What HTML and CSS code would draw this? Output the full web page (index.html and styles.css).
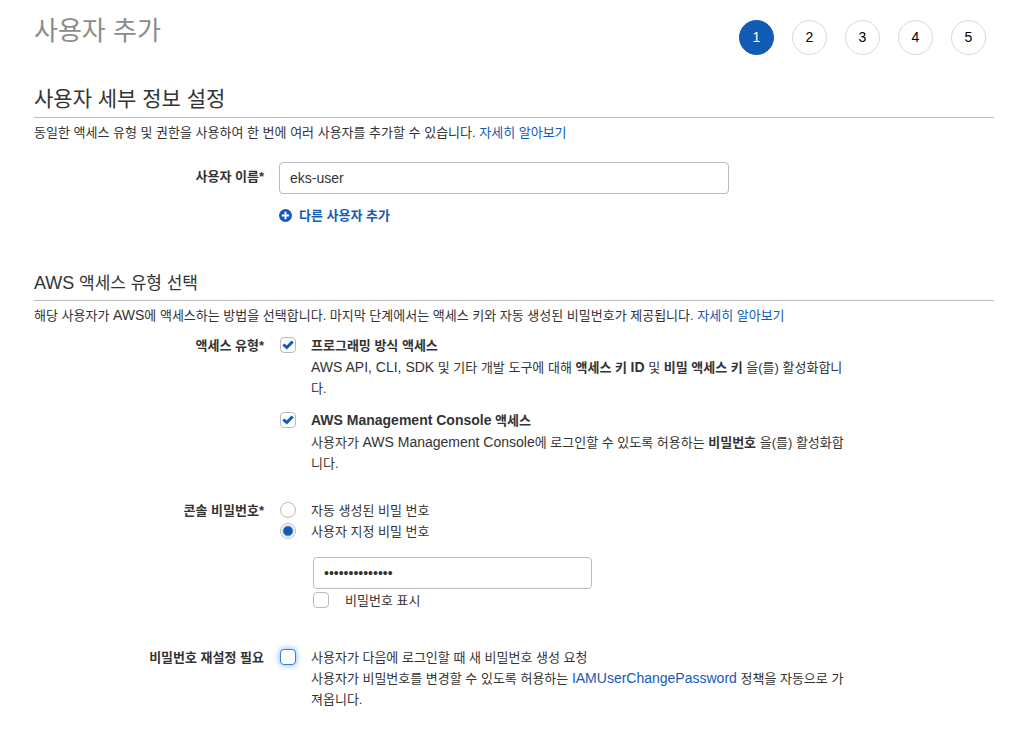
FILE: index.html
```html
<!DOCTYPE html>
<html lang="ko">
<head>
<meta charset="utf-8">
<meta name="viewport" content="width=device-width, initial-scale=1">
<title>사용자 추가</title>
<link rel="stylesheet" href="styles.css">
</head>
<body>
<main class="page">
  <header class="page-header">
    <h1 class="page-title">사용자 추가</h1>
    <ol class="steps">
      <li class="step step-current" aria-current="step">1</li>
      <li class="step">2</li>
      <li class="step">3</li>
      <li class="step">4</li>
      <li class="step">5</li>
    </ol>
  </header>

  <form>
    <section class="section">
      <h2 class="section-title">사용자 세부 정보 설정</h2>
      <p class="intro">동일한 액세스 유형 및 권한을 사용하여 한 번에 여러 사용자를 추가할 수 있습니다. <a class="link" href="#">자세히 알아보기</a></p>
      <div class="row row-name">
        <label class="row-label name-label" for="user-name">사용자 이름*</label>
        <div>
          <input class="text-input name-input" id="user-name" type="text" value="eks-user">
          <button class="add-button" type="button">
            <svg class="add-icon" viewBox="0 0 14 14" aria-hidden="true"><circle cx="7" cy="7" r="7" fill="currentColor"/><path d="M7 3v8M3 7h8" stroke="#fff" stroke-width="2.2"/></svg>
            다른 사용자 추가
          </button>
        </div>
      </div>
    </section>

    <section class="section">
      <h3 class="section-title section-subtitle"><span class="latin-large">AWS</span> 액세스 유형 선택</h3>
      <p class="intro">해당 사용자가 <span class="latin">AWS</span>에 액세스하는 방법을 선택합니다. 마지막 단계에서는 액세스 키와 자동 생성된 비밀번호가 제공됩니다. <a class="link" href="#">자세히 알아보기</a></p>

      <div class="row row-access" role="group" aria-labelledby="access-label">
        <span class="row-label" id="access-label">액세스 유형*</span>
        <div class="access-options">
          <div class="option">
            <span class="control">
              <input class="check" id="programmatic" type="checkbox" checked>
              <svg class="check-mark" viewBox="0 0 16 16" aria-hidden="true"><path d="M2.3 8.6 4.4 6.5 6.7 8.5 11.6 3.4 13.8 5.5 6.8 12.6Z" fill="currentColor"/></svg>
            </span>
            <div>
              <label class="option-title" for="programmatic">프로그래밍 방식 액세스</label>
              <p class="option-text"><span class="latin">AWS API, CLI, SDK</span> 및 기타 개발 도구에 대해 <strong>액세스 키 <span class="latin">ID</span></strong> 및 <strong>비밀 액세스 키</strong> 을(를) 활성화합니다.</p>
            </div>
          </div>
          <div class="option">
            <span class="control">
              <input class="check" id="console" type="checkbox" checked>
              <svg class="check-mark" viewBox="0 0 16 16" aria-hidden="true"><path d="M2.3 8.6 4.4 6.5 6.7 8.5 11.6 3.4 13.8 5.5 6.8 12.6Z" fill="currentColor"/></svg>
            </span>
            <div>
              <label class="option-title" for="console"><span class="latin">AWS Management Console</span> 액세스</label>
              <p class="option-text">사용자가 <span class="latin">AWS Management Console</span>에 로그인할 수 있도록 허용하는 <strong>비밀번호</strong> 을(를) 활성화합니다.</p>
            </div>
          </div>
        </div>
      </div>

      <div class="row row-password" role="group" aria-labelledby="password-label">
        <span class="row-label" id="password-label">콘솔 비밀번호*</span>
        <div>
          <div class="option">
            <span class="control"><input class="radio" id="auto-password" name="password-type" type="radio"></span>
            <label for="auto-password">자동 생성된 비밀 번호</label>
          </div>
          <div class="option">
            <span class="control"><input class="radio" id="custom-password" name="password-type" type="radio" checked></span>
            <label for="custom-password">사용자 지정 비밀 번호</label>
          </div>
          <div class="password-box">
            <input class="text-input password-input" type="password" value="abcdefghijklmn" aria-label="사용자 지정 비밀 번호">
            <div class="option">
              <span class="control"><input class="check" id="show-password" type="checkbox"></span>
              <label for="show-password">비밀번호 표시</label>
            </div>
          </div>
        </div>
      </div>

      <div class="row row-reset" role="group" aria-labelledby="reset-label">
        <span class="row-label" id="reset-label">비밀번호 재설정 필요</span>
        <div class="option">
          <span class="control"><input class="check check-active" id="reset" type="checkbox"></span>
          <div>
            <label for="reset">사용자가 다음에 로그인할 때 새 비밀번호 생성 요청</label>
            <p class="reset-text">사용자가 비밀번호를 변경할 수 있도록 허용하는 <a class="link latin" href="#">IAMUserChangePassword</a> 정책을 자동으로 가져옵니다.</p>
          </div>
        </div>
      </div>
    </section>
  </form>
</main>
</body>
</html>
```
FILE: styles.css
```css
* {
  box-sizing: border-box;
}

body {
  margin: 0;
  background: #fff;
  color: #333;
  font-family: "Liberation Sans", "Noto Sans CJK KR", sans-serif;
  font-size: 13px;
  line-height: 21px;
}

h1, h2, h3, p, ol {
  margin: 0;
  padding: 0;
  font-weight: 400;
}

.page {
  padding: 12px 16px 40px 34px;
}

.latin {
  font-size: 14px;
}

.latin-large {
  font-size: 18px;
}

.link {
  color: #125bb5;
  text-decoration: none;
}

.page-header {
  display: flex;
  justify-content: space-between;
  align-items: flex-start;
  margin-bottom: 28px;
}

.page-title {
  color: #8c8c8c;
  font-size: 26px;
  line-height: 38px;
}

.steps {
  display: flex;
  gap: 18px;
  padding: 8px 8px 0 0;
  list-style: none;
}

.step {
  display: flex;
  align-items: center;
  justify-content: center;
  width: 35px;
  height: 35px;
  border: 1px solid #d9d9d9;
  border-radius: 50%;
  color: #000;
  font-size: 14px;
}

.step-current {
  border-color: #125bb5;
  background: #125bb5;
  color: #fff;
}

.section-title {
  padding-bottom: 2px;
  border-bottom: 1px solid #bbb;
  font-size: 21px;
  line-height: 32px;
}

.section-subtitle {
  font-size: 17px;
  line-height: 28px;
}

.intro {
  padding-top: 4px;
}

.row {
  display: grid;
  grid-template-columns: 230px minmax(0, 572px);
  gap: 15px;
}

.row-name {
  margin: 19px 0 43px;
}

.row-access {
  margin-top: 9px;
}

.row-password {
  margin-top: 26px;
}

.row-reset {
  margin-top: 36px;
}

.row-label {
  font-weight: 700;
  text-align: right;
}

.name-label {
  padding-top: 4px;
}

.text-input {
  display: block;
  width: 100%;
  height: 32px;
  padding: 0 10px;
  border: 1px solid #bbb;
  border-radius: 4px;
  background: #fff;
  color: #333;
  font-family: inherit;
  font-size: 14px;
}

.name-input {
  max-width: 450px;
}

.add-button {
  display: flex;
  align-items: center;
  gap: 7px;
  margin-top: 11px;
  padding: 0;
  border: 0;
  background: none;
  color: #125bb5;
  font: inherit;
  font-weight: 700;
}

.add-icon {
  width: 13px;
  height: 13px;
}

.access-options {
  display: grid;
  gap: 11px;
}

.option {
  display: grid;
  grid-template-columns: 17px minmax(0, 1fr);
  gap: 15px;
}

.control {
  position: relative;
  display: flex;
  align-items: center;
  height: 20px;
  padding-left: 1px;
}

.check,
.radio {
  appearance: none;
  flex: none;
  width: 16px;
  height: 16px;
  margin: 0;
  border: 1px solid #bbb;
  border-radius: 4px;
  background: #fff;
}

.radio {
  border-radius: 50%;
}

.radio:checked {
  background: radial-gradient(circle, #125bb5 4px, #fff 6px);
}

.check-active {
  border-color: #2f7fe0;
  box-shadow: 0 0 6px #75aef5;
}

.check-mark {
  position: absolute;
  left: 1px;
  width: 16px;
  height: 16px;
  color: #125bb5;
  pointer-events: none;
}

.option-title {
  display: block;
  font-weight: 700;
}

.option-text {
  padding-top: 1px;
}

.password-box {
  max-width: 313px;
  padding: 15px 0 0 34px;
}

.password-box .control {
  padding-left: 0;
}

.password-input {
  margin-bottom: 1px;
}
```
